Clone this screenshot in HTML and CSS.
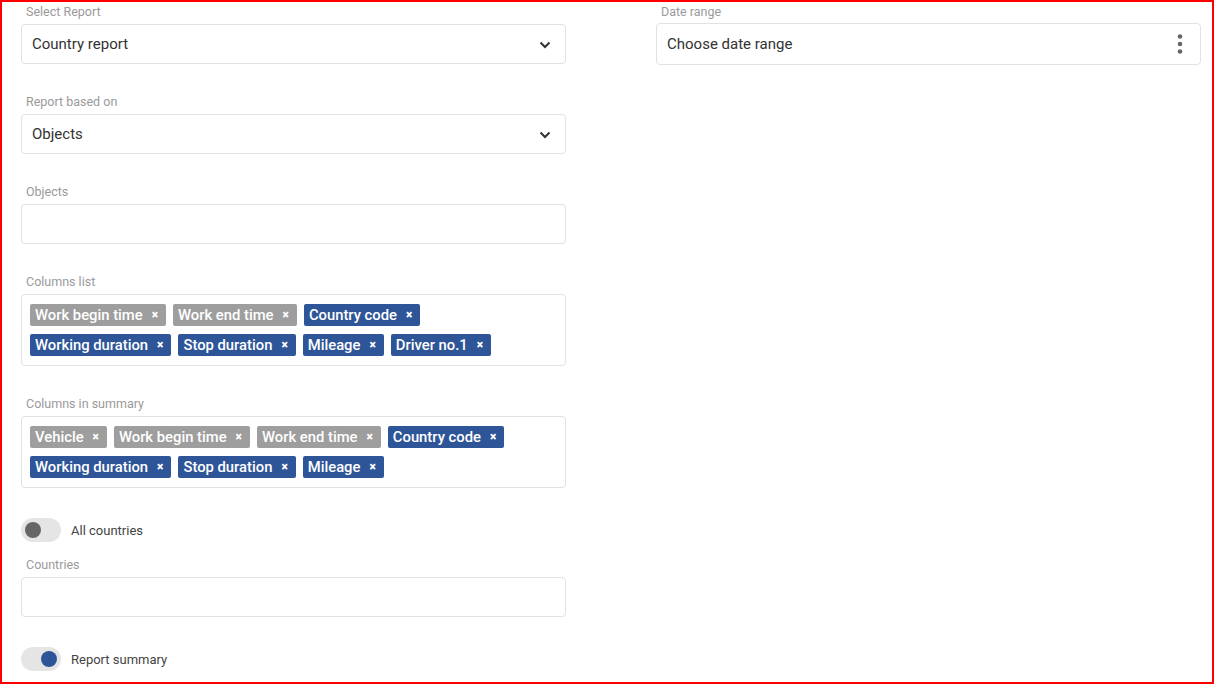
FILE: index.html
```html
<!DOCTYPE html>
<html lang="en">
<head>
  <meta charset="UTF-8">
  <title>Country report</title>
  <link rel="stylesheet" href="styles.css">
</head>
<body>
  <div class="report-form">

    <!-- Left column -->
    <div class="col">
      <div class="field">
        <label>Select Report</label>
        <div class="box select">
          <span>Country report</span>
          <svg class="chevron" width="12" height="8" viewBox="0 0 12 8"><path d="M1.5 1.5 L6 6 L10.5 1.5" fill="none" stroke="#333" stroke-width="2"/></svg>
        </div>
      </div>

      <div class="field">
        <label>Report based on</label>
        <div class="box select">
          <span>Objects</span>
          <svg class="chevron" width="12" height="8" viewBox="0 0 12 8"><path d="M1.5 1.5 L6 6 L10.5 1.5" fill="none" stroke="#333" stroke-width="2"/></svg>
        </div>
      </div>

      <div class="field">
        <label>Objects</label>
        <div class="box"></div>
      </div>

      <div class="field">
        <label>Columns list</label>
        <div class="box tags">
          <span class="tag grey">Work begin time <b>×</b></span>
          <span class="tag grey">Work end time <b>×</b></span>
          <span class="tag">Country code <b>×</b></span>
          <span class="tag">Working duration <b>×</b></span>
          <span class="tag">Stop duration <b>×</b></span>
          <span class="tag">Mileage <b>×</b></span>
          <span class="tag">Driver no.1 <b>×</b></span>
        </div>
      </div>

      <div class="field">
        <label>Columns in summary</label>
        <div class="box tags">
          <span class="tag grey">Vehicle <b>×</b></span>
          <span class="tag grey">Work begin time <b>×</b></span>
          <span class="tag grey">Work end time <b>×</b></span>
          <span class="tag">Country code <b>×</b></span>
          <span class="tag">Working duration <b>×</b></span>
          <span class="tag">Stop duration <b>×</b></span>
          <span class="tag">Mileage <b>×</b></span>
        </div>
      </div>

      <div class="toggle-row">
        <span class="switch"><span class="knob"></span></span>
        <span>All countries</span>
      </div>

      <div class="field">
        <label>Countries</label>
        <div class="box"></div>
      </div>

      <div class="toggle-row">
        <span class="switch on"><span class="knob"></span></span>
        <span>Report summary</span>
      </div>
    </div>

    <!-- Right column -->
    <div class="col">
      <div class="field">
        <label>Date range</label>
        <div class="box select date">
          <span>Choose date range</span>
          <svg class="dots" width="6" height="20" viewBox="0 0 6 20"><circle cx="3" cy="2.5" r="2.3" fill="#666"/><circle cx="3" cy="10" r="2.3" fill="#666"/><circle cx="3" cy="17.5" r="2.3" fill="#666"/></svg>
        </div>
      </div>
    </div>

  </div>
</body>
</html>
```

FILE: styles.css
```css
* {
  box-sizing: border-box;
}
html, body {
  margin: 0;
  height: 684px;
}
body {
  font-family: Roboto, "Noto Sans", Arial, sans-serif;
  background: #fff;
  color: #333;
  border: 2px solid #f00;
  padding: 1px 11px 0 19px;
  overflow: hidden;
}
.report-form {
  display: grid;
  grid-template-columns: 545px 545px;
  column-gap: 90px;
}
.field {
  margin-bottom: 29px;
}
label {
  display: block;
  padding-left: 5px;
  font-size: 12.5px;
  line-height: 17px;
  color: #9a9a9a;
  margin-bottom: 4px;
}
.box {
  border: 1px solid #e2e2e2;
  border-radius: 4px;
  height: 40px;
  background: #fff;
}
.select {
  display: flex;
  align-items: center;
  justify-content: space-between;
  padding: 0 14px 0 10px;
  font-size: 15px;
  color: #333;
}
.chevron {
  margin-top: 1px;
}
.date {
  height: 42px;
  margin-top: -1px;
  padding-right: 17px;
}
.tags {
  height: auto;
  display: flex;
  flex-wrap: wrap;
  gap: 8px 7px;
  padding: 9px 8px;
}
.tag {
  display: inline-flex;
  align-items: center;
  height: 22px;
  padding: 0 8px 0 5px;
  border-radius: 2px;
  background: #2e5597;
  color: #fff;
  font-size: 14.8px;
  font-weight: 500;
}
.tag.grey {
  background: #9e9e9e;
}
.tag b {
  font-size: 12px;
  font-weight: 900;
  margin-left: 9px;
}
.toggle-row {
  display: flex;
  align-items: center;
  gap: 10px;
  height: 25px;
  padding-top: 1px;
  margin-bottom: 14px;
  font-size: 13px;
  color: #444;
}
.switch {
  position: relative;
  display: inline-block;
  width: 40px;
  height: 24px;
  border-radius: 12px;
  background: #e5e5e5;
}
.knob {
  position: absolute;
  top: 4px;
  left: 4px;
  width: 16px;
  height: 16px;
  border-radius: 50%;
  background: #666;
}
.switch.on .knob {
  left: 20px;
  background: #2e5597;
}
```
